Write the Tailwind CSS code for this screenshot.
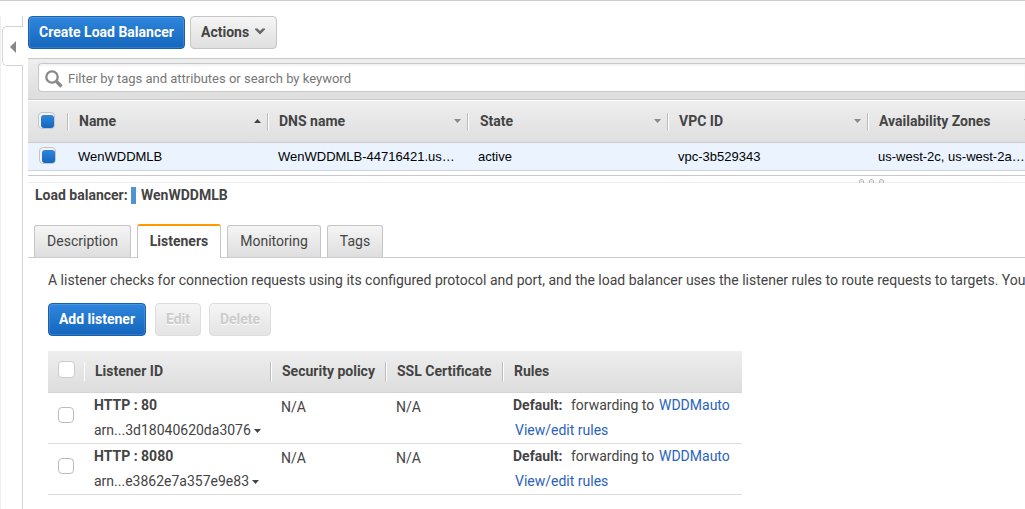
<!DOCTYPE html>
<html lang="en">
<head>
<meta charset="utf-8">
<title>Load Balancers</title>
<script src="https://cdn.jsdelivr.net/npm/@tailwindcss/browser@4"></script>
</head>
<body class="bg-white">
<div class="w-[1025px] h-[509px] overflow-hidden flex border-t border-[#ccc] font-['Roboto',sans-serif] text-[14px] leading-[20px] text-[#444] whitespace-nowrap">
  <!-- collapsed navigation rail -->
  <aside class="w-[23px] shrink-0 pt-[15px] flex">
    <div class="flex-1 border-l border-[#eee] flex flex-col">
      <div class="h-[10px] border-r border-[#d4d4d4]"></div>
      <div class="ml-px h-[40px] border border-r-0 border-[#d4d4d4] rounded-l-[5px] flex items-center pl-[7px] pt-px">
        <svg class="w-[6px] h-[12px]" viewBox="0 0 6 12"><path d="M6 0v12L0 6z" fill="#888"/></svg>
      </div>
      <div class="flex-1 border-r border-[#d4d4d4]"></div>
    </div>
  </aside>

  <main class="ml-[5px] w-[997px] shrink-0">
    <div class="pt-[15px] flex gap-[5px] font-bold">
      <button class="w-[157px] h-[33px] pb-[2px] rounded-[4px] border border-[#1a5fad] bg-linear-to-b from-[#2f86dc] to-[#1466bd] text-white inset-shadow-[0_0_0_1px_#ffffff22]">Create Load Balancer</button>
      <button class="w-[87px] h-[33px] pb-[2px] rounded-[4px] border border-[#c5c5c5] bg-linear-to-b from-[#f5f5f5] to-[#dfdfdf] flex items-center pl-[10px] gap-[6px]">Actions
        <svg class="w-[10px] h-[7px] mb-[1px]" viewBox="0 0 10 7"><path d="M0 .5h2.500L5 3 7.500 .5H10v1L5 6.500 0 1.500z" fill="#666"/></svg>
      </button>
    </div>

    <div class="mt-[9px] h-[42px] border-y border-[#c8c8c8] bg-linear-to-b from-[#eee] to-[#ddd] pl-[10px] pt-[4px]">
      <div class="h-[29px] border border-r-0 border-[#c8c8c8] rounded-l-[4px] bg-white flex items-center pl-[6px] text-[13px] text-[#777] inset-shadow-[0_2px_2px_#0000000d]">
        <svg class="w-[18px] h-[18px] mt-[3px] mr-[5px] shrink-0" viewBox="0 0 18 18" fill="none" stroke="#888"><circle cx="7" cy="7" r="5.7" stroke-width="2.3"/><path d="M11.500 11.500l5 5" stroke-width="3.4"/></svg>
        <span class="pt-[2px]">Filter by tags and attributes or search by keyword</span>
      </div>
    </div>

    <div class="h-[43px] border-t border-t-white border-b border-b-[#ccc] bg-linear-to-b from-[#eee] to-[#dfdfdf] flex items-center font-bold">
      <div class="w-[39px] shrink-0 pl-[10px] pb-[2px]"><div class="size-[17px] rounded-[4px] border border-[#c4c4c4] bg-[#f3f3f3] pt-[2px] pl-[2px]"><div class="size-[13px] rounded-[3px] bg-linear-to-b from-[#2f86dc] to-[#1466bd]"></div></div></div>
      <div class="w-[200px] shrink-0 h-[18px] border-l border-[#bbb] shadow-[inset_1px_0_0_white] pl-[11px] pr-[6px] pb-[2px] flex items-center justify-between">Name<svg class="w-[7px] h-[4px]" viewBox="0 0 7 4"><path d="M0 4h7L3.500 0z" fill="#444"/></svg></div>
      <div class="w-[200px] shrink-0 h-[18px] border-l border-[#bbb] shadow-[inset_1px_0_0_white] pl-[11px] pr-[6px] pb-[2px] flex items-center justify-between">DNS name<svg class="w-[7px] h-[4px]" viewBox="0 0 7 4"><path d="M0 0h7L3.500 4z" fill="#888"/></svg></div>
      <div class="w-[200px] shrink-0 h-[18px] border-l border-[#bbb] shadow-[inset_1px_0_0_white] pl-[12px] pr-[6px] pb-[2px] flex items-center justify-between">State<svg class="w-[7px] h-[4px]" viewBox="0 0 7 4"><path d="M0 0h7L3.500 4z" fill="#888"/></svg></div>
      <div class="w-[200px] shrink-0 h-[18px] border-l border-[#bbb] shadow-[inset_1px_0_0_white] pl-[11px] pr-[6px] pb-[2px] flex items-center justify-between">VPC ID<svg class="w-[7px] h-[4px]" viewBox="0 0 7 4"><path d="M0 0h7L3.500 4z" fill="#888"/></svg></div>
      <div class="w-[200px] shrink-0 h-[18px] border-l border-[#bbb] shadow-[inset_1px_0_0_white] pl-[11px] pr-[6px] pb-[2px] flex items-center"><span class="w-[145px]">Availability Zones</span><svg class="w-[7px] h-[4px]" viewBox="0 0 7 4"><path d="M0 0h7L3.500 4z" fill="#888"/></svg></div>
    </div>
    <div class="h-[28px] border-b border-[#ccd5e2] bg-[#eaf3fe] flex items-center text-[13px] text-black font-['Liberation_Sans',sans-serif]">
      <div class="w-[50px] pl-[11px]"><div class="-mt-[2px] size-[17px] rounded-[4px] border border-[#c4c4c4] bg-[#f3f3f3] pt-[2px] pl-[2px]"><div class="size-[13px] rounded-[3px] bg-linear-to-b from-[#2f86dc] to-[#1466bd]"></div></div></div>
      <div class="w-[200px]">WenWDDMLB</div><div class="w-[200px]">WenWDDMLB-44716421.us…</div><div class="w-[200px]">active</div><div class="w-[200px]">vpc-3b529343</div><div>us-west-2c, us-west-2a…</div>
    </div>
    <!-- split pane handle -->
    <div class="mt-[4px] h-[8px] border-t border-t-[#c8c8c8] border-b border-b-[#eee] flex justify-end pr-[140px] pt-[3px]">
      <svg class="w-[26px] h-[4px]" viewBox="0 0 26 4" fill="#e4e4e4" stroke="#bbb"><path d="M.5 4V1.500l1-1h2l1 1V4M10.500 4V1.500l1-1h2l1 1V4M20.500 4V1.500l1-1h2l1 1V4"/></svg>
    </div>

    <div class="h-[24px] pl-[7px] pt-[4px] flex items-start font-bold">
      <span class="w-[96px] leading-[17px]">Load balancer:</span><span class="w-[5px] h-[17px] bg-[#4e94d4] mr-[5px]"></span><span class="leading-[17px]">WenWDDMLB</span>
    </div>

    <div class="mt-[17px] h-[34px] border-b border-[#ccc] flex items-end pl-[6px]">
      <div class="w-[97px] h-[32px] mr-[6px] pb-px border border-b-0 border-[#c5c5c5] rounded-t-[3px] bg-linear-to-b from-[#f5f5f5] to-[#dedede] flex items-center justify-center">Description</div>
      <div class="w-[84px] h-[34px] -mb-px mr-[6px] pb-[3px] border border-b-0 border-[#c5c5c5] border-t-2 border-t-[#f90] rounded-t-[3px] bg-white flex items-center justify-center font-bold">Listeners</div>
      <div class="w-[94px] h-[32px] mr-[6px] pb-px border border-b-0 border-[#c5c5c5] rounded-t-[3px] bg-linear-to-b from-[#f5f5f5] to-[#dedede] flex items-center justify-center">Monitoring</div>
      <div class="w-[56px] h-[32px] pb-px border border-b-0 border-[#c5c5c5] rounded-t-[3px] bg-linear-to-b from-[#f5f5f5] to-[#dedede] flex items-center justify-center">Tags</div>
    </div>

    <div class="pl-[20px]">
      <p class="mt-[12px]">A listener checks for connection requests using its configured protocol and port, and the load balancer uses the listener rules to route requests to targets. You</p>
      <div class="mt-[13px] flex font-bold">
        <button class="w-[98px] h-[33px] mr-[9px] pb-[2px] rounded-[4px] border border-[#1a5fad] bg-linear-to-b from-[#2f86dc] to-[#1466bd] text-white inset-shadow-[0_0_0_1px_#ffffff22]">Add listener</button>
        <button class="w-[46px] h-[33px] mr-[8px] pb-[2px] rounded-[4px] border border-[#ddd] bg-linear-to-b from-[#f5f5f5] to-[#e4e4e4] text-[#ccc] text-shadow-[0_1px_0_white]">Edit</button>
        <button class="w-[62px] h-[33px] pb-[2px] rounded-[4px] border border-[#ddd] bg-linear-to-b from-[#f5f5f5] to-[#e4e4e4] text-[#ccc] text-shadow-[0_1px_0_white]">Delete</button>
      </div>

      <div class="mt-[15px] w-[694px]">
        <div class="h-[42px] border-b border-[#d5d5d5] bg-linear-to-b from-[#eee] to-[#ddd] flex items-center font-bold leading-[19px]">
          <div class="w-[36px] pl-[10px] pb-[4px]"><div class="size-[17px] rounded-[4px] border border-[#ccc] bg-white"></div></div>
          <div class="w-[186px] h-[19px] border-l border-white pl-[10px]">Listener ID</div>
          <div class="w-[115px] h-[19px] border-l border-[#bbb] shadow-[inset_1px_0_0_white] pl-[11px]">Security policy</div>
          <div class="w-[117px] h-[19px] border-l border-[#bbb] shadow-[inset_1px_0_0_white] pl-[11px]">SSL Certificate</div>
          <div class="h-[19px] border-l border-[#bbb] shadow-[inset_1px_0_0_white] pl-[11px]">Rules</div>
        </div>
        <div class="h-[51px] border-b border-[#ddd] flex">
          <div class="w-[46px] pl-[10px] pt-[14px]"><div class="size-[16px] rounded-[4px] border border-[#bbb] bg-white"></div></div>
          <div class="w-[187px] leading-[25px]"><div class="font-bold">HTTP : 80</div><div class="flex items-center">arn...3d18040620da3076<svg class="ml-[3px] w-[7px] h-[4px]" viewBox="0 0 7 4"><path d="M0 0h7L3.500 4z" fill="#444"/></svg></div></div>
          <div class="w-[115px] pt-[4px]">N/A</div><div class="w-[117px] pt-[4px]">N/A</div>
          <div class="leading-[25px]"><div class="flex"><b class="w-[58px]">Default:</b><span class="w-[88px]">forwarding to</span><a class="text-[#2a62bc]">WDDMauto</a></div><a class="block pl-[2px] text-[#2a62bc]">View/edit rules</a></div>
        </div>
        <div class="h-[51px] border-b border-[#ddd] flex">
          <div class="w-[46px] pl-[10px] pt-[14px]"><div class="size-[16px] rounded-[4px] border border-[#bbb] bg-white"></div></div>
          <div class="w-[187px] leading-[25px]"><div class="font-bold">HTTP : 8080</div><div class="flex items-center">arn...e3862e7a357e9e83<svg class="ml-[3px] w-[7px] h-[4px]" viewBox="0 0 7 4"><path d="M0 0h7L3.500 4z" fill="#444"/></svg></div></div>
          <div class="w-[115px] pt-[4px]">N/A</div><div class="w-[117px] pt-[4px]">N/A</div>
          <div class="leading-[25px]"><div class="flex"><b class="w-[58px]">Default:</b><span class="w-[88px]">forwarding to</span><a class="text-[#2a62bc]">WDDMauto</a></div><a class="block pl-[2px] text-[#2a62bc]">View/edit rules</a></div>
        </div>
      </div>
    </div>
  </main>
</div>
</body>
</html>
